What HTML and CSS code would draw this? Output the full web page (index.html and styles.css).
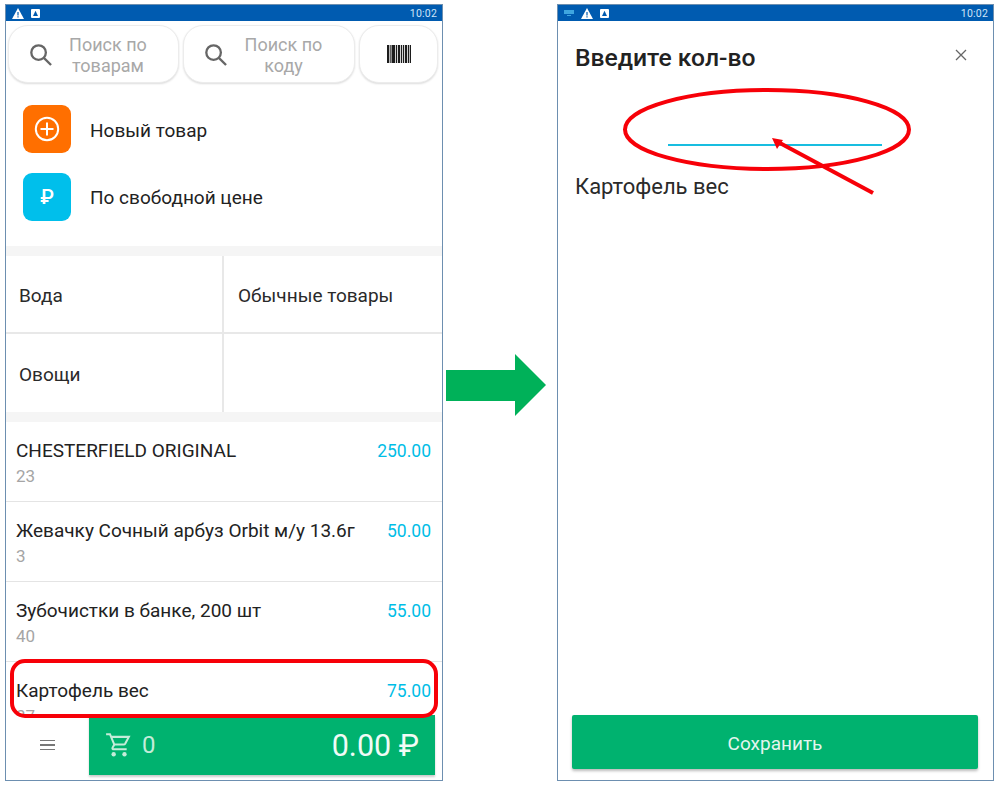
FILE: index.html
```html
<!DOCTYPE html>
<html lang="ru">
<head>
<meta charset="utf-8">
<title>Касса</title>
<link rel="stylesheet" href="styles.css">
</head>
<body>
<main class="stage">
  <section class="phone phone-left">
    <header class="status">
      <svg class="st-warn" viewBox="0 0 12 11"><path d="M6 0 12 11H0Z" fill="#fff"/><path d="M5.400 4h1.200v3.600H5.400zM5.400 8.300h1.200v1.200H5.400z" fill="#005bb0"/></svg>
      <svg class="st-a" viewBox="0 0 9 9"><rect width="9" height="9" rx="1" fill="#fff"/><path d="M4.500 1.800 7 7H2Z" fill="#005bb0"/></svg>
      <span class="st-time">10:02</span>
    </header>
    <div class="search-row">
      <div class="search wide first">
        <svg class="mag" viewBox="0 0 24 24"><circle cx="10" cy="10" r="7.600" fill="none" stroke="#666" stroke-width="2.400"/><path d="m15.500 15.500 7.500 7.500" stroke="#666" stroke-width="2.400"/></svg>
        <span class="search-label">Поиск по<br>товарам</span>
      </div>
      <div class="search wide">
        <svg class="mag" viewBox="0 0 24 24"><circle cx="10" cy="10" r="7.600" fill="none" stroke="#666" stroke-width="2.400"/><path d="m15.500 15.500 7.500 7.500" stroke="#666" stroke-width="2.400"/></svg>
        <span class="search-label">Поиск по<br>коду</span>
      </div>
      <div class="search scan">
        <svg class="barcode" viewBox="0 0 24 18"><path d="M0 0h2v18H0zM2.700 0h1v18h-1zM4.500 0h3.500v18H4.500zM8.800 0h1.400v18H8.800zM11 0h2.200v18H11zM14 0h1.200v18H14zM16 0h1.200v18H16zM18 0h2v18h-2zM20.800 0h1.200v18h-1.200zM22.700 0h1.300v18h-1.300z" fill="#1c1c1c"/></svg>
      </div>
    </div>
    <div class="actions">
      <div class="action">
        <div class="tile orange">
          <svg class="plus" viewBox="0 0 26 26"><circle cx="13" cy="13" r="11.200" fill="none" stroke="#fff" stroke-width="2"/><path d="M13 6.500v13M6.500 13h13" stroke="#fff" stroke-width="2"/></svg>
        </div>
        <span class="action-label">Новый товар</span>
      </div>
      <div class="action">
        <div class="tile blue"><span class="rub">₽</span></div>
        <span>По свободной цене</span>
      </div>
    </div>
    <div class="band"></div>
    <div class="cats">
      <div class="cat">Вода</div>
      <div class="cat">Обычные товары</div>
      <div class="cat">Овощи</div>
      <div class="cat"></div>
    </div>
    <div class="band"></div>
    <div class="list">
      <div class="item"><div class="item-main"><span>CHESTERFIELD ORIGINAL</span><b>250.00</b></div><div class="item-sub">23</div></div>
      <div class="item"><div class="item-main"><span>Жевачку Сочный арбуз Orbit м/у 13.6г</span><b>50.00</b></div><div class="item-sub">3</div></div>
      <div class="item"><div class="item-main"><span>Зубочистки в банке, 200 шт</span><b>55.00</b></div><div class="item-sub">40</div></div>
      <div class="item"><div class="item-main"><span>Картофель вес</span><b>75.00</b></div><div class="item-sub">37</div></div>
    </div>
    <footer class="bottom">
      <div class="menu"><i></i><i></i><i></i></div>
      <div class="cart">
        <svg class="cart-ico" viewBox="0 0 24 24"><path d="M1 2h3.600l4 9.600-1.600 2.800c-.4.900.2 1.600 1 1.600h12M8.600 11.600h8.600c.6 0 1.100-.3 1.400-.8L22 4.500H5.600" fill="none" stroke="#c4ecd9" stroke-width="1.900"/><circle cx="8" cy="20.500" r="2" fill="#c4ecd9"/><circle cx="18" cy="20.500" r="2" fill="#c4ecd9"/></svg>
        <span class="cart-count">0</span>
        <span class="cart-sum">0.00 ₽</span>
      </div>
    </footer>
    <div class="ring"></div>
  </section>

  <div class="between">
    <svg class="go" viewBox="0 0 100 62"><path d="M0 16h69V0l31 31-31 31V47H0Z" fill="#00b159"/></svg>
  </div>

  <section class="phone phone-right">
    <header class="status">
      <svg class="st-kb" viewBox="0 0 10 6"><path d="M0 0h10v4H0zM3 5h4v1H3z" fill="#3fa6e0"/></svg>
      <svg class="st-warn" viewBox="0 0 12 11"><path d="M6 0 12 11H0Z" fill="#fff"/><path d="M5.400 4h1.200v3.600H5.400zM5.400 8.300h1.200v1.200H5.400z" fill="#005bb0"/></svg>
      <svg class="st-a" viewBox="0 0 9 9"><rect width="9" height="9" rx="1" fill="#fff"/><path d="M4.500 1.800 7 7H2Z" fill="#005bb0"/></svg>
      <span class="st-time">10:02</span>
    </header>
    <div class="dialog">
      <div class="dialog-head">
        <h1>Введите кол-во</h1>
        <svg class="close" viewBox="0 0 12 12"><path d="m1 1 10 10M11 1 1 11" stroke="#666" stroke-width="1.300"/></svg>
      </div>
      <div class="qty-line"></div>
      <div class="dialog-name">Картофель вес</div>
      <button class="save">Сохранить</button>
    </div>
    <svg class="mark" viewBox="0 0 436 200">
      <ellipse cx="209" cy="124.500" rx="142" ry="39.500" fill="none" stroke="#f70008" stroke-width="4"/>
      <path d="M315 188 220 137" stroke="#f70008" stroke-width="4"/>
      <path d="M214 133 225 135 219 144Z" fill="#f70008"/>
    </svg>
  </section>
</main>
</body>
</html>
```
FILE: styles.css
```css
* { box-sizing: border-box; }
html, body { margin: 0; padding: 0; background: #fff; }
body { width: 1000px; height: 789px; overflow: hidden; font-family: Roboto, "Noto Sans", sans-serif; color: #222; }
.stage { display: flex; padding: 4px 0 0 5px; height: 789px; }

.phone { position: relative; display: flex; flex-direction: column; height: 777px; border: 1px solid #6d8fb0; background: #fff; overflow: hidden; flex: none; }
.phone-left { width: 438px; }
.phone-right { width: 437px; }

.status { display: flex; align-items: center; height: 16px; padding: 0 5px 0 6px; background: #005bb0; flex: none; }
.st-warn { width: 12px; height: 11px; margin-right: 7px; }
.st-a { width: 9px; height: 9px; }
.st-kb { width: 10px; height: 6px; margin-right: 7px; margin-left: 0; }
.st-time { margin-left: auto; font-size: 10.500px; color: #cfe4f7; letter-spacing: .2px; }

.search-row { display: flex; gap: 4px; padding: 4px 4px 0 2px; flex: none; }
.search { display: flex; align-items: center; height: 58px; border: 1px solid #ececec; border-radius: 20px; box-shadow: 0 1px 2px #ddd; background: #fff; }
.wide { width: 172px; padding-left: 20px; }
.first { width: 171px; }
.scan { flex: 1; justify-content: center; }
.mag { width: 23px; height: 23px; flex: none; }
.search-label { flex: 1; padding: 1px 14px 0 0; text-align: center; font-size: 18px; line-height: 21px; color: #a8a8a8; }
.barcode { width: 24px; height: 18px; }

.actions { display: flex; flex-direction: column; gap: 20px; padding: 22px 0 25px 17px; flex: none; }
.action { display: flex; align-items: center; gap: 19px; font-size: 19px; color: #222; }
.action-label { padding-top: 2px; }
.tile { display: flex; align-items: center; justify-content: center; width: 48px; height: 48px; border-radius: 9px; }
.orange { background: #ff6f00; }
.blue { background: #00bfeb; }
.plus { width: 26px; height: 26px; }
.rub { font-size: 20px; font-weight: 500; color: #fff; }

.band { height: 10px; background: #f5f5f5; flex: none; }
.cats { display: grid; grid-template-columns: 218px 1fr; grid-auto-rows: 78px; flex: none; }
.cat { display: flex; align-items: center; padding: 2px 0 0 13px; font-size: 19px; color: #2a2a2a; border-right: 0; }
.cat:nth-child(odd) { border-right: 2px solid #e8e8e8; }
.cat:nth-child(even) { padding-left: 14px; }
.cat:nth-child(-n+2) { border-bottom: 2px solid #e8e8e8; }

.list { flex: 1; min-height: 0; overflow: hidden; }
.item { height: 80px; padding: 16px 11px 0 10px; border-bottom: 1px solid #e4e4e4; }
.item-main { display: flex; justify-content: space-between; align-items: baseline; font-size: 19px; line-height: 25px; color: #222; }
.item-main b { font-size: 17.500px; font-weight: 400; color: #00bde6; }
.item-sub { margin-top: 1px; font-size: 17px; line-height: 22px; color: #a5a5a5; }

.bottom { display: flex; height: 60px; flex: none; margin-bottom: 5px; position: relative; }
.menu { display: flex; flex-direction: column; justify-content: center; gap: 3px; width: 83px; padding: 0 34px; background: #fff; }
.menu i { display: block; height: 1.500px; background: #777; }
.cart { display: flex; align-items: center; width: 346px; padding: 0 16px; background: #00b26f; box-shadow: 0 2px 2px #ccc; }
.cart-ico { width: 26px; height: 26px; }
.cart-count { margin-left: 11px; font-size: 24px; color: #c4ecd9; }
.cart-sum { margin-left: auto; font-size: 30.500px; color: #f1fbf6; }

.ring { position: absolute; left: 4px; top: 654px; width: 428px; height: 59px; border: 4px solid #f70008; border-radius: 15px; }

.between { display: flex; align-items: center; justify-content: flex-start; width: 114px; height: 777px; flex: none; padding-left: 3px; }
.go { width: 100px; height: 62px; margin-top: -16px; }

.dialog { flex: 1; display: flex; flex-direction: column; padding: 0 14px 11px; }
.dialog-head { display: flex; align-items: center; justify-content: space-between; height: 44px; margin-top: 14px; padding: 0 12px 0 3px; }
.dialog-head h1 { margin: 0; font-size: 24.700px; font-weight: 500; color: #222; }
.close { width: 12px; height: 12px; margin-top: -4px; }
.qty-line { width: 214px; height: 2px; margin: 65px 0 0 96px; background: #18bde0; }
.dialog-name { margin: 28px 0 0 3px; font-size: 22px; color: #2a2a2a; }
.save { margin-top: auto; width: 406px; height: 54px; padding-top: 3px; border: 0; border-radius: 2px; background: #00b26f; box-shadow: 0 2px 3px #bbb; font-family: inherit; font-size: 19px; color: #e4f5ee; }

.mark { position: absolute; left: 0; top: 0; width: 436px; height: 200px; }
```
